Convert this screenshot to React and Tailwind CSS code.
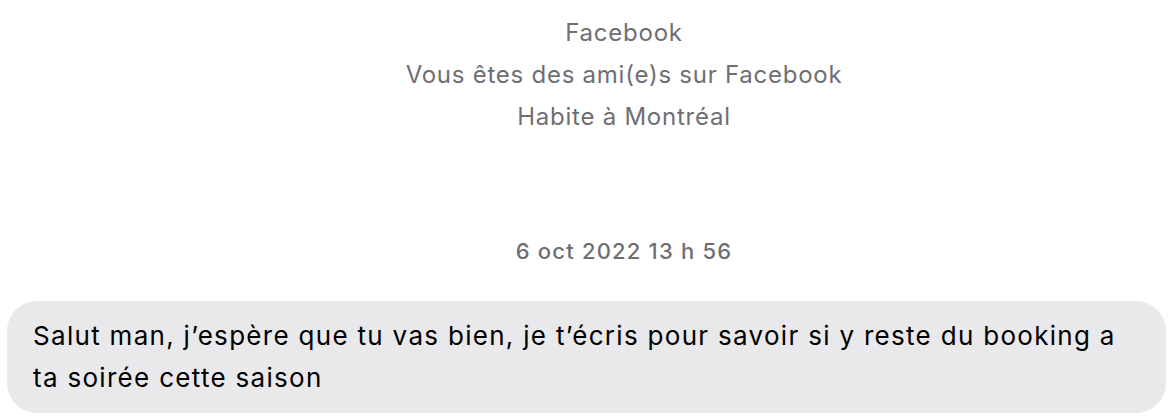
export default function App() {
  return (
    <div className="w-[1170px] h-[418px] bg-white overflow-hidden" style={{ fontFamily: "Inter, 'Noto Sans', sans-serif" }}>
      <div className="pl-[78px] pt-[12px] flex flex-col items-center text-[24px] leading-[42px] tracking-[0.75px] text-[#6e6e73]">
        <div>Facebook</div>
        <div>Vous êtes des ami(e)s sur Facebook</div>
        <div>Habite à Montréal</div>
      </div>
      <div className="pl-[78px] mt-[98px] flex justify-center text-[22px] leading-[30px] font-medium tracking-[1.2px] text-[#6e6e73]">
        6 oct 2022 13 h 56
      </div>
      <div className="pl-[7px] pr-[4px] mt-[35px]">
        <div className="bg-[#e9e9eb] rounded-[30px] pl-[26px] pr-[40px] py-[14px] text-[26px] leading-[42px] tracking-[1.3px] text-black">
          Salut man, j’espère que tu vas bien, je t’écris pour savoir si y reste du booking a ta soirée cette saison
        </div>
      </div>
    </div>
  );
}
